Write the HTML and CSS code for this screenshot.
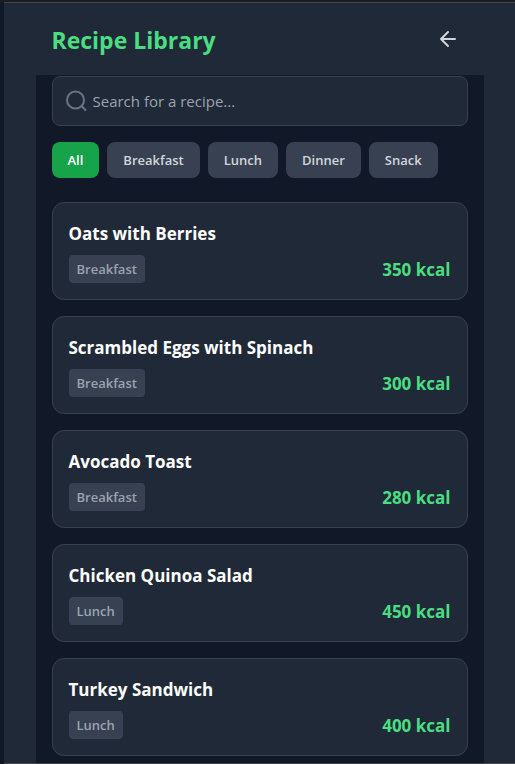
FILE: index.html
```html
<!DOCTYPE html>
<html lang="en">
<head>
    <meta charset="UTF-8">
    <meta name="viewport" content="width=device-width, initial-scale=1.0">
    <title>Recipe Library</title>
    <link rel="stylesheet" href="styles.css">
</head>
<body>

<div class="screen">
    <header class="header">
        <h1 class="title">Recipe Library</h1>
        <button type="button" class="back-btn" aria-label="Back">
            <svg width="24" height="24" viewBox="0 0 24 24" fill="none" stroke="currentColor" stroke-width="2" stroke-linecap="round" stroke-linejoin="round">
                <path d="M19 12H5M12 5l-7 7 7 7"/>
            </svg>
        </button>
    </header>

    <main class="content">
        <label class="search">
            <svg class="search-icon" width="24" height="24" viewBox="0 0 24 24" fill="none" stroke="currentColor" stroke-width="2" stroke-linecap="round">
                <circle cx="10.500" cy="11" r="8.500"/>
                <path d="M16.700 17.200L20.500 21"/>
            </svg>
            <input type="text" class="search-input" placeholder="Search for a recipe..." aria-label="Search for a recipe">
        </label>

        <div class="filters">
            <button type="button" class="filter active">All</button>
            <button type="button" class="filter">Breakfast</button>
            <button type="button" class="filter">Lunch</button>
            <button type="button" class="filter">Dinner</button>
            <button type="button" class="filter">Snack</button>
        </div>

        <div class="recipes">
            <article class="card">
                <h2 class="card-title">Oats with Berries</h2>
                <div class="card-info">
                    <span class="tag">Breakfast</span>
                    <span class="kcal">350 kcal</span>
                </div>
            </article>
            <article class="card">
                <h2 class="card-title">Scrambled Eggs with Spinach</h2>
                <div class="card-info">
                    <span class="tag">Breakfast</span>
                    <span class="kcal">300 kcal</span>
                </div>
            </article>
            <article class="card">
                <h2 class="card-title">Avocado Toast</h2>
                <div class="card-info">
                    <span class="tag">Breakfast</span>
                    <span class="kcal">280 kcal</span>
                </div>
            </article>
            <article class="card">
                <h2 class="card-title">Chicken Quinoa Salad</h2>
                <div class="card-info">
                    <span class="tag">Lunch</span>
                    <span class="kcal">450 kcal</span>
                </div>
            </article>
            <article class="card">
                <h2 class="card-title">Turkey Sandwich</h2>
                <div class="card-info">
                    <span class="tag">Lunch</span>
                    <span class="kcal">400 kcal</span>
                </div>
            </article>
        </div>
    </main>
</div>

</body>
</html>
```
FILE: styles.css
```css
* {
    box-sizing: border-box;
}

body {
    margin: 0;
    border-top: 2px solid #1b1d23;
    padding-left: 4px;
    min-height: 100vh;
    display: flex;
    flex-direction: column;
    font-family: "Segoe UI", "Open Sans", "Noto Sans", sans-serif;
    background-color: #111827;
}

.screen {
    flex: 1;
    display: flex;
    flex-direction: column;
    align-items: center;
    background-color: #1f2937;
    border-top: 1px solid #43464b;
    border-bottom: 1px solid #43464b;
}

.header {
    width: 100%;
    max-width: 448px;
    padding: 16px;
    display: flex;
    align-items: center;
    justify-content: space-between;
}

.title {
    margin: 0;
    padding-top: 2px;
    font-size: 23px;
    line-height: 32px;
    font-weight: bold;
    color: #4ade80;
}

.back-btn {
    display: flex;
    padding: 8px;
    border: none;
    background: none;
    color: #d1d5db;
    cursor: pointer;
}

.content {
    flex: 1;
    width: 100%;
    max-width: 448px;
    padding: 1px 16px 7px;
    background-color: #111827;
}

.search {
    height: 50px;
    padding: 0 12px;
    display: flex;
    align-items: center;
    gap: 4px;
    background-color: #1f2937;
    border: 1px solid #374151;
    border-radius: 8px;
}

.search-icon {
    flex: none;
    color: #6b7280;
}

.search-input {
    flex: 1;
    min-width: 0;
    padding: 0;
    border: none;
    outline: none;
    background: none;
    font-family: inherit;
    font-size: 15px;
    color: white;
}

.search-input::placeholder {
    color: #9ca3af;
}

.filters {
    display: flex;
    gap: 8px;
    margin: 16px 0 24px;
}

.filter {
    padding: 8px 16px;
    border: none;
    border-radius: 8px;
    font-family: inherit;
    font-size: 13px;
    line-height: 20px;
    font-weight: 600;
    background-color: #374151;
    color: #d1d5db;
    cursor: pointer;
}

.filter.active {
    background-color: #16a34a;
    color: white;
}

.recipes {
    display: flex;
    flex-direction: column;
    gap: 16px;
}

.card {
    padding: 16px;
    background-color: #1f2937;
    border: 1px solid #374151;
    border-radius: 12px;
}

.card-title {
    margin: 0 0 6px;
    font-size: 17px;
    line-height: 30px;
    font-weight: bold;
    color: white;
}

.card-info {
    display: flex;
    align-items: center;
    justify-content: space-between;
}

.tag {
    padding: 4px 8px;
    border-radius: 4px;
    font-size: 13px;
    line-height: 20px;
    font-weight: 600;
    background-color: #374151;
    color: #9ca3af;
}

.kcal {
    padding-top: 2px;
    font-size: 17px;
    line-height: 26px;
    font-weight: bold;
    color: #4ade80;
}
```
